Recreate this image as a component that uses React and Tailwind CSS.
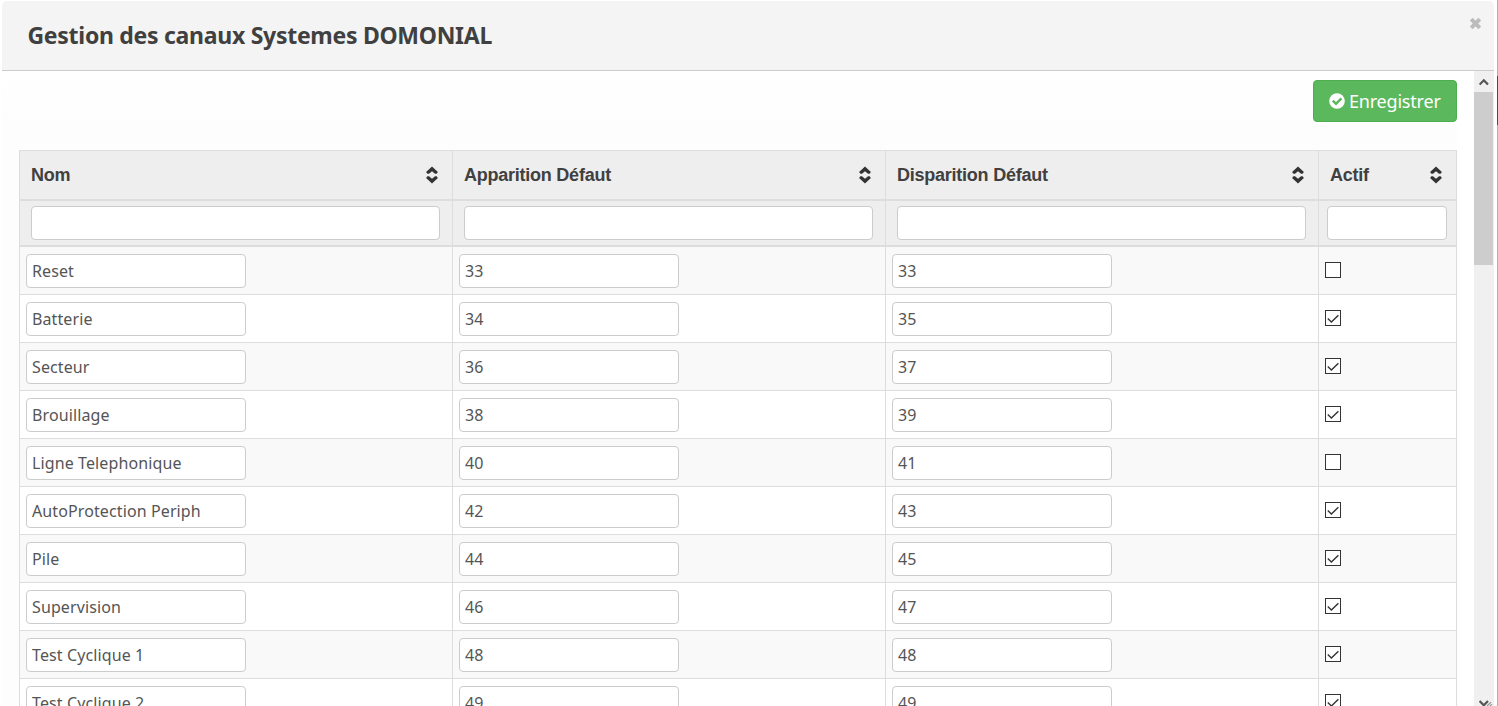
import React from "react";

const COLUMNS = ["Nom", "Apparition Défaut", "Disparition Défaut", "Actif"];

const ROWS = [
  ["Reset", 33, 33, false],
  ["Batterie", 34, 35, true],
  ["Secteur", 36, 37, true],
  ["Brouillage", 38, 39, true],
  ["Ligne Telephonique", 40, 41, false],
  ["AutoProtection Periph", 42, 43, true],
  ["Pile", 44, 45, true],
  ["Supervision", 46, 47, true],
  ["Test Cyclique 1", 48, 48, true],
  ["Test Cyclique 2", 49, 49, true],
];

const GRID = "grid grid-cols-[433px_433px_433px_138px]";

function SortIcon() {
  return (
    <svg width="14" height="18" viewBox="0 0 14 18" fill="#333">
      <path d="M7 0.4 12.9 6 11.6 7.8H10L7 5.2 4 7.8H2.4L1.1 6Z" />
      <path d="M7 17.6 12.9 12 11.6 10.2H10L7 12.8 4 10.2H2.4L1.1 12Z" />
    </svg>
  );
}

function Field({ value }) {
  return (
    <input
      type="text"
      defaultValue={value}
      className="block h-[34px] w-[220px] rounded-[4px] border border-[#ccc] bg-white px-[5px] text-[16px] tracking-[0.11px] text-[#555] outline-none"
    />
  );
}

function Check({ checked }) {
  return (
    <span role="checkbox" aria-checked={checked} className="block size-4 border border-[#333] bg-white">
      {checked && (
        <svg width="14" height="14" viewBox="0 0 14 14" fill="none" stroke="#333" strokeWidth="1.4">
          <path d="M1.8 7.6 5.4 11 12.4 4.2" />
        </svg>
      )}
    </span>
  );
}

function HeaderCell({ label }) {
  return (
    <div className="flex h-12 items-center justify-between border-r border-[#ddd] pl-[11px] pr-[13px]">
      <span className="font-['Liberation_Sans',Arial,sans-serif] text-[18px] font-bold tracking-[-0.24px] text-[#404040]">{label}</span>
      <SortIcon />
    </div>
  );
}

function ScrollBar() {
  return (
    <div className="flex w-5 flex-col bg-[#f0f0f0]">
      <div className="flex h-[21px] items-center pl-[5px]">
        <svg width="10" height="8" viewBox="0 0 10 8" fill="none" stroke="#555" strokeWidth="2.2">
          <path d="M0.6 6.6 4.8 2.3 9 6.6" />
        </svg>
      </div>
      <div className="h-[173px] w-[19px] bg-[#cdcdcd]" />
      <div className="flex flex-1 items-end pl-[5px]">
        <svg width="14" height="6" viewBox="0 0 14 6" fill="none" stroke="#555" strokeWidth="2.2">
          <path d="M0.6 1 4.8 5.3 9 1" />
          <path d="M8 6 12 2.2M11 6 13 4.2" stroke="#999" strokeWidth="1.2" />
        </svg>
      </div>
    </div>
  );
}

export default function App() {
  return (
    <div className="flex h-[706px] w-[1498px] justify-between overflow-hidden bg-white font-['Noto_Sans',sans-serif]">
      <div className="flex w-[1494px] flex-col pl-[2px] pt-px">
        <header className="flex h-[70px] shrink-0 justify-between rounded-t-[5px] border-b border-[#ccc] bg-[#f4f4f4] pl-[25.5px] pr-[12px]">
          <h1 className="pt-[16px] text-[23px] font-bold leading-[36px] tracking-[-0.28px] text-[#404040]">Gestion des canaux Systemes DOMONIAL</h1>
          <button aria-label="Fermer" className="mt-[16px] h-[13px]">
            <svg width="13" height="13" viewBox="0 0 13 13" fill="none" stroke="#bcbcbc" strokeWidth="4">
              <path d="M2.2 2.2 10.8 10.8M10.8 2.2 2.2 10.8" />
            </svg>
          </button>
        </header>
        <div className="flex min-h-0 flex-1 justify-between">
          <main className="w-[1455px] overflow-hidden bg-gradient-to-b from-white to-[#fdfdfd] to-[60px] pl-[17px]">
            <div className="flex justify-end pt-[9px]">
              <button className="flex h-[42px] w-[144px] items-center gap-[4px] rounded-[4px] border border-[#4cae4c] bg-[#5cb85c] pl-[15px] text-[18px] tracking-[-0.2px] text-white">
                <svg width="16" height="16" viewBox="0 0 16 16">
                  <circle cx="8" cy="8" r="7.8" fill="#fff" />
                  <path d="M3.8 7.6 7 10.8 12.4 5.4" fill="none" stroke="#5cb85c" strokeWidth="2.5" />
                </svg>
                Enregistrer
              </button>
            </div>
            <div className="mt-[28px] w-[1438px] border-l border-t border-[#ddd]">
              <div className={`${GRID} border-b-2 border-[#ddd] bg-[#eee]`}>
                {COLUMNS.map((label) => (
                  <HeaderCell key={label} label={label} />
                ))}
              </div>
              <div className={`${GRID} border-b-2 border-[#ddd] bg-[#eee]`}>
                {COLUMNS.map((label, i) => (
                  <div key={label} className={`h-11 border-r border-[#ddd] pt-[5px] ${i === 3 ? "pl-[8px] pr-[9px]" : "pl-[11px] pr-[12px]"}`}>
                    <input aria-label={label} className="block h-[34px] w-full rounded-[4px] border border-[#ccc] bg-white outline-none" />
                  </div>
                ))}
              </div>
              {ROWS.map(([name, on, off, active]) => (
                <div key={name} className={`${GRID} border-b border-[#ddd] odd:bg-[#f9f9f9] even:bg-white`}>
                  {[name, on, off].map((value, i) => (
                    <div key={i} className="h-[47px] border-r border-[#ddd] pl-[6px] pt-[7px]">
                      <Field value={value} />
                    </div>
                  ))}
                  <div className="border-r border-[#ddd] pl-[6px] pt-[15px]">
                    <Check checked={active} />
                  </div>
                </div>
              ))}
            </div>
          </main>
          <ScrollBar />
        </div>
      </div>
      <div className="flex w-px flex-col bg-[#b0b0b0] pt-[76px]">
        <div className="h-[49px] bg-[#2b547e]" />
      </div>
    </div>
  );
}
